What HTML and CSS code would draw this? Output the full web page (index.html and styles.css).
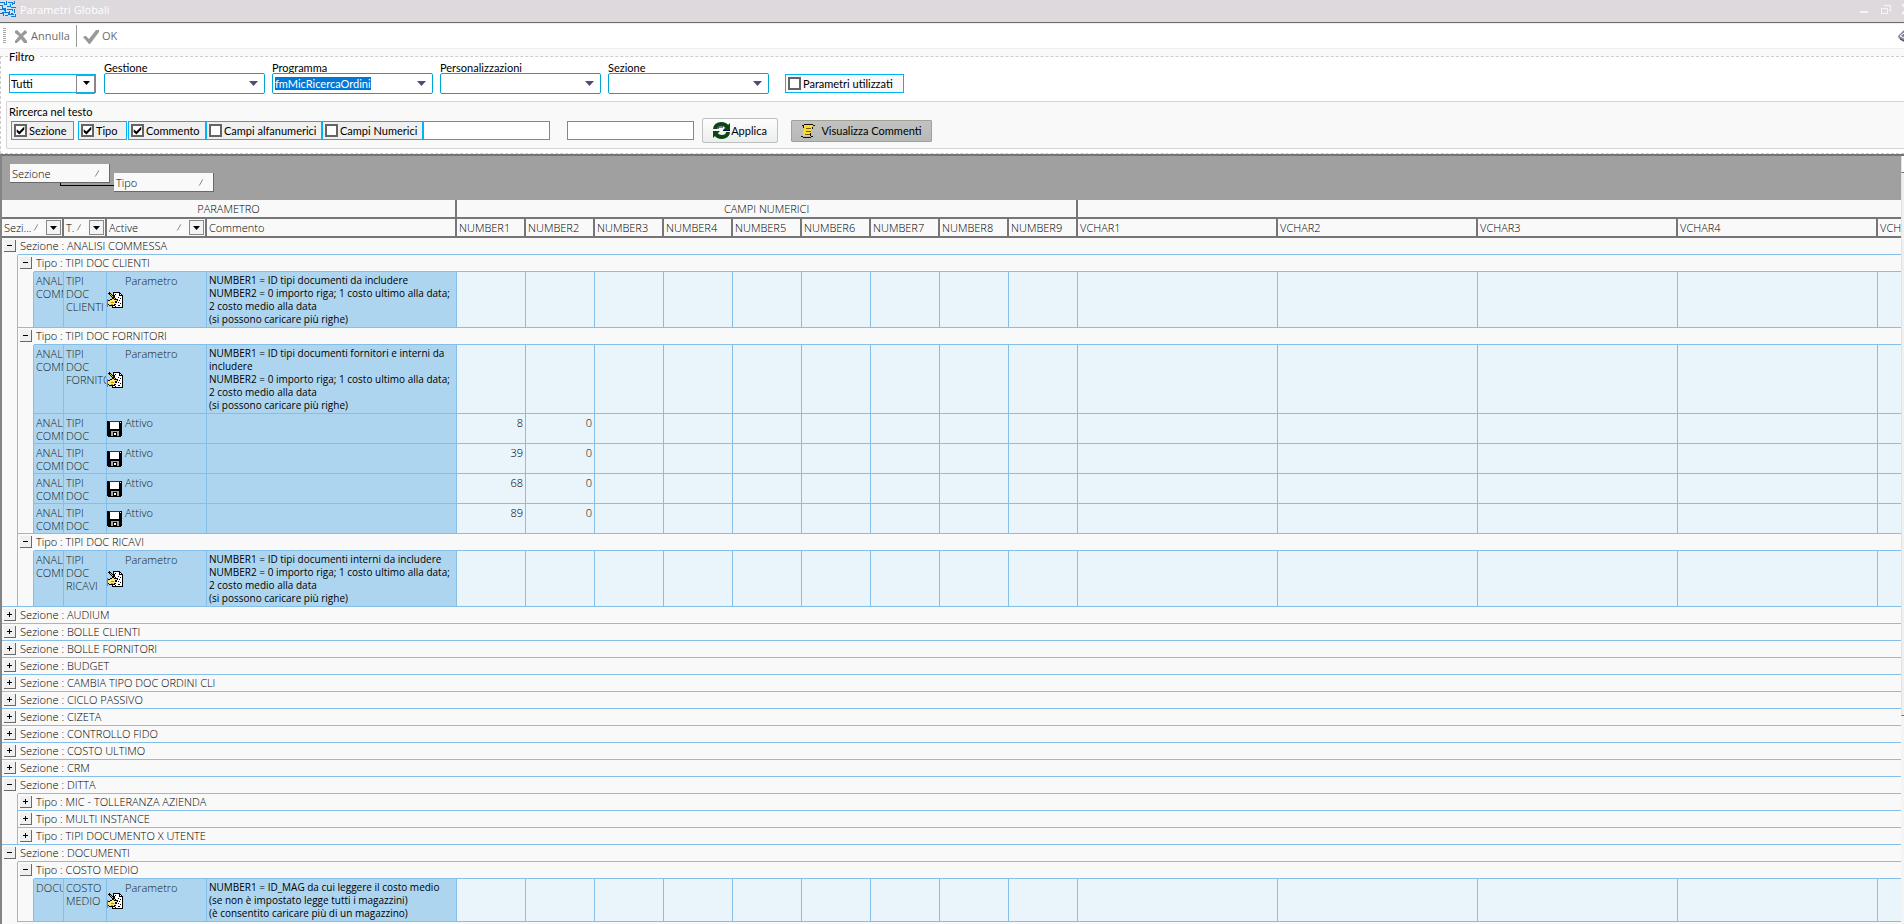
FILE: index.html
```html
<!DOCTYPE html>
<html lang="it">
<head>
<meta charset="utf-8">
<title>Parametri Globali</title>
<link rel="stylesheet" href="styles.css">
</head>
<body>
<svg class="defs" aria-hidden="true">
  <symbol id="sort" viewBox="0 0 10 9"><path d="M1 8L5 1" stroke="#8a8a8a" fill="none"/><path d="M5 1L9 8H1" stroke="#fff" fill="none"/></symbol>
  <symbol id="edit" viewBox="0 0 16 16" shape-rendering="crispEdges">
    <path d="M6 0h7v1h1v1h1v1h1v13H5V8h1z" fill="#000"/>
    <path d="M7 1h5v3h3v11H6V8h1z" fill="#fff"/>
    <path d="M13 2h1v1h-1z" fill="#fff"/>
    <path d="M11 5h1v1h-1zM13 6h1v1h-1zM12 8h1v1h-1zM11 10h1v1h-1zM13 11h1v1h-1zM11 13h2v1h-2zM8 14h1v1H8z" fill="#000"/>
    <path d="M0 7h1v8H0z" fill="#00a8e8"/>
    <path d="M1 8h2V7h2V6h4v1h2v2h-1v2H9v2H8v1H2v-1H1z" fill="#000"/>
    <path d="M1 9h2V8h2V7h3v1h2v1H8v2h1v1H7v1H2v-1H1z" fill="#ffe77a"/>
    <path d="M4 10h3v1H4zM4 12h2v1H4z" fill="#c89000"/>
    <path d="M2 1l7 7" stroke="#000" stroke-width="2"/><path d="M3 2l5 5" stroke="#f5c800"/>
    <path d="M9 2L5 7" stroke="#000"/>
  </symbol>
  <symbol id="disk" viewBox="0 0 16 16" shape-rendering="crispEdges">
    <path d="M0 0h15v15h-1v1H1v-1H0z" fill="#000"/>
    <rect x="3" y="1" width="9" height="7" fill="#fff"/><rect x="2" y="0" width="11" height="1" fill="#7a1a08"/>
    <rect x="4" y="10" width="8" height="5" fill="#a8a8a8"/><rect x="6" y="11" width="4" height="4" fill="#000"/><rect x="7" y="12" width="2" height="2" fill="#fff"/>
    <rect x="13" y="1" width="1" height="1" fill="#fff"/>
  </symbol>
</svg>
<header class="titlebar">
  <svg class="app-icon" viewBox="0 0 16 16" shape-rendering="crispEdges"><rect width="16" height="16" fill="#d3e1ee"/><path d="M0 1.500h4v3M6.500 0v4h-3M8 1.500h4v3M14.500 0v3h-2M0 4.500h2v3h4M7 5.500h3v-2M11 6.500h5M0 8.500h4v2M5.500 7v4M7 8.500h5v2M14.500 8v4M0 12.500h3v3M2 11.500h6v3M9.500 10v4h4M5 14.500h3M11 12.500h2M15.500 13v3h-5" fill="none" stroke="#0a7cdc"/></svg>
  <h1>Parametri Globali</h1>
  <svg class="win-buttons" viewBox="0 0 44 12" shape-rendering="crispEdges"><path d="M0 8h8" stroke="#f6f4f6" stroke-width="2"/><path d="M21.500 4.500h6v5h-6zM24 1.500h6.500v5h-2" fill="none" stroke="#f6f4f6"/><path d="M21 4h7M24 1h7" stroke="#f6f4f6"/><path d="M42 0l6 5l-6 5" fill="none" stroke="#f6f4f6" stroke-width="2"/></svg>
</header>
<nav class="toolbar">
  <span class="grip"></span>
  <button type="button" class="tool"><svg viewBox="0 0 14 15" width="14" height="15"><path d="M3 1l4 4l4-4l2 2v1L9 7l4 5v2h-3l-3-4l-4 4H1v-2l4-5L1 4V2z" fill="#999"/></svg>Annulla</button>
  <span class="separator"></span>
  <button type="button" class="tool"><svg viewBox="0 0 16 15" width="16" height="15"><path d="M0 8l2-1h1l3 3l7-9h3v2L7 15H6z" fill="#999"/></svg>OK</button>
  <svg class="cube" viewBox="0 0 6 12"><path d="M6 0L0 6l1 3l5 3z" fill="#888394"/><path d="M6 3L2 6l4 2M1 9l5 2" stroke="#fff" fill="none"/><path d="M2 9l4 2" stroke="#2d2755"/></svg>
</nav>
<main>
<fieldset class="filters">
  <legend>Filtro</legend>
  <div class="filter-row">
    <div class="classic-select"><select aria-label="Filtro"><option>Tutti</option></select></div>
    <div class="field"><label for="gestione">Gestione</label><div class="combo"><select id="gestione"><option></option></select></div></div>
    <div class="field"><label for="programma">Programma</label><div class="combo"><select id="programma" class="selected"><option>fmMicRicercaOrdini</option></select></div></div>
    <div class="field"><label for="personal">Personalizzazioni</label><div class="combo"><select id="personal"><option></option></select></div></div>
    <div class="field"><label for="sezione">Sezione</label><div class="combo"><select id="sezione"><option></option></select></div></div>
    <label class="check used"><input type="checkbox">Parametri utilizzati</label>
  </div>
  <section class="search">
    <h2>Rircerca nel testo</h2>
    <div class="search-row">
      <label class="check c1"><input type="checkbox" checked>Sezione</label>
      <label class="check c2"><input type="checkbox" checked>Tipo</label>
      <label class="check c3"><input type="checkbox" checked>Commento</label>
      <label class="check c4"><input type="checkbox">Campi alfanumerici</label>
      <label class="check c5"><input type="checkbox">Campi Numerici</label>
      <input type="text" class="text first" aria-label="Testo">
      <input type="text" class="text second" aria-label="Valore">
      <button type="button" class="apply"><svg viewBox="0 0 17 17" width="17" height="17"><path d="M2 7C2 4 5 2 8 2s5 1 6 3" fill="none" stroke="#0a4512" stroke-width="4"/><path d="M17 1v7h-7z" fill="#0a4512"/><path d="M15 10c0 3-3 5-6 5s-5-1-6-3" fill="none" stroke="#0a4512" stroke-width="4"/><path d="M0 16V9h7z" fill="#0a4512"/><path d="M10 8.500h7M5 7V5h5" stroke="#0a0a50" fill="none"/></svg>Applica</button>
      <button type="button" class="comments"><svg viewBox="0 0 14 14" width="14" height="14"><path d="M3 1h9l-3 11H2z" fill="#ffd92e"/><path d="M1 1.500h2M3 0.500h9M12 1.500h2M0 12.500h2M2 13.500h8M10 12.500h2M2.500 2v2M11.500 3v2M9.500 9v3" stroke="#111" fill="none"/><path d="M5 4.500h5M5 7.500h5M4 10.500h5" stroke="#6d5c10"/></svg>Visualizza Commenti</button>
    </div>
  </section>
</fieldset>
<section class="grid">
<div class="grid-body">
  <div class="group-panel">
    <div class="chip">Sezione<svg class="sort"><use href="#sort"/></svg></div>
    <span class="link"></span>
    <div class="chip lower">Tipo<svg class="sort"><use href="#sort"/></svg></div>
  </div>
  <table>
    <colgroup><col class="w-ind"><col class="w-ind"><col class="w-sez"><col class="w-tipo"><col class="w-act"><col class="w-com"><col span="9" class="w-num"><col span="4" class="w-char"><col></colgroup>
    <thead>
      <tr class="bands"><th colspan="6">PARAMETRO</th><th colspan="9">CAMPI NUMERICI</th><th colspan="5" class="last"></th></tr>
      <tr>
        <th colspan="3"><div class="head"><span>Sezi...</span><svg class="sort"><use href="#sort"/></svg><button type="button" class="drop" aria-label="Filtra Sezione"></button></div></th>
        <th><div class="head"><span>T.</span><svg class="sort"><use href="#sort"/></svg><button type="button" class="drop" aria-label="Filtra Tipo"></button></div></th>
        <th><div class="head"><span>Active</span><svg class="sort"><use href="#sort"/></svg><button type="button" class="drop" aria-label="Filtra Active"></button></div></th>
        <th>Commento</th><th>NUMBER1</th><th>NUMBER2</th><th>NUMBER3</th><th>NUMBER4</th><th>NUMBER5</th><th>NUMBER6</th><th>NUMBER7</th><th>NUMBER8</th><th>NUMBER9</th><th>VCHAR1</th><th>VCHAR2</th><th>VCHAR3</th><th>VCHAR4</th><th class="last">VCHAR5</th>
      </tr>
    </thead>
    <tbody>
      <tr class="group"><td class="tg"><button type="button" class="toggle" aria-label="Comprimi"></button></td><td colspan="19">Sezione : ANALISI COMMESSA</td></tr>
      <tr class="group"><td class="ind"></td><td class="tg"><button type="button" class="toggle" aria-label="Comprimi"></button></td><td colspan="18">Tipo : TIPI DOC CLIENTI</td></tr>
      <tr class="data"><td class="ind"></td><td class="ind end"></td><td><div class="cell l4">ANALISI COMMESSA</div></td><td><div class="cell l4">TIPI<br>DOC<br>CLIENTI</div></td><td><div class="state l4"><svg><use href="#edit"/></svg>Parametro</div></td><td class="note">NUMBER1 = ID tipi documenti da includere<br>NUMBER2 = 0 importo riga; 1 costo ultimo alla data;<br>2 costo medio alla data<br>(si possono caricare più righe)</td><td></td><td></td><td></td><td></td><td></td><td></td><td></td><td></td><td></td><td></td><td></td><td></td><td></td><td></td></tr>
      <tr class="group"><td class="ind"></td><td class="tg"><button type="button" class="toggle" aria-label="Comprimi"></button></td><td colspan="18">Tipo : TIPI DOC FORNITORI</td></tr>
      <tr class="data"><td class="ind"></td><td class="ind"></td><td><div class="cell l5">ANALISI COMMESSA</div></td><td><div class="cell l5">TIPI<br>DOC<br>FORNITORI</div></td><td><div class="state l5"><svg><use href="#edit"/></svg>Parametro</div></td><td class="note">NUMBER1 = ID tipi documenti fornitori e interni da<br>includere<br>NUMBER2 = 0 importo riga; 1 costo ultimo alla data;<br>2 costo medio alla data<br>(si possono caricare più righe)</td><td></td><td></td><td></td><td></td><td></td><td></td><td></td><td></td><td></td><td></td><td></td><td></td><td></td><td></td></tr>
      <tr class="data"><td class="ind"></td><td class="ind"></td><td><div class="cell l2">ANALISI COMMESSA</div></td><td><div class="cell l2">TIPI<br>DOC</div></td><td><div class="state l2"><svg><use href="#disk"/></svg>Attivo</div></td><td class="note"></td><td>8</td><td>0</td><td></td><td></td><td></td><td></td><td></td><td></td><td></td><td></td><td></td><td></td><td></td><td></td></tr>
      <tr class="data"><td class="ind"></td><td class="ind"></td><td><div class="cell l2">ANALISI COMMESSA</div></td><td><div class="cell l2">TIPI<br>DOC</div></td><td><div class="state l2"><svg><use href="#disk"/></svg>Attivo</div></td><td class="note"></td><td>39</td><td>0</td><td></td><td></td><td></td><td></td><td></td><td></td><td></td><td></td><td></td><td></td><td></td><td></td></tr>
      <tr class="data"><td class="ind"></td><td class="ind"></td><td><div class="cell l2">ANALISI COMMESSA</div></td><td><div class="cell l2">TIPI<br>DOC</div></td><td><div class="state l2"><svg><use href="#disk"/></svg>Attivo</div></td><td class="note"></td><td>68</td><td>0</td><td></td><td></td><td></td><td></td><td></td><td></td><td></td><td></td><td></td><td></td><td></td><td></td></tr>
      <tr class="data"><td class="ind"></td><td class="ind end"></td><td><div class="cell l2">ANALISI COMMESSA</div></td><td><div class="cell l2">TIPI<br>DOC</div></td><td><div class="state l2"><svg><use href="#disk"/></svg>Attivo</div></td><td class="note"></td><td>89</td><td>0</td><td></td><td></td><td></td><td></td><td></td><td></td><td></td><td></td><td></td><td></td><td></td><td></td></tr>
      <tr class="group"><td class="ind"></td><td class="tg"><button type="button" class="toggle" aria-label="Comprimi"></button></td><td colspan="18">Tipo : TIPI DOC RICAVI</td></tr>
      <tr class="data"><td class="ind end"></td><td class="ind end"></td><td><div class="cell l4">ANALISI COMMESSA</div></td><td><div class="cell l4">TIPI<br>DOC<br>RICAVI</div></td><td><div class="state l4"><svg><use href="#edit"/></svg>Parametro</div></td><td class="note">NUMBER1 = ID tipi documenti interni da includere<br>NUMBER2 = 0 importo riga; 1 costo ultimo alla data;<br>2 costo medio alla data<br>(si possono caricare più righe)</td><td></td><td></td><td></td><td></td><td></td><td></td><td></td><td></td><td></td><td></td><td></td><td></td><td></td><td></td></tr>
      <tr class="group"><td class="tg end"><button type="button" class="toggle plus" aria-label="Espandi"></button></td><td colspan="19">Sezione : AUDIUM</td></tr>
      <tr class="group"><td class="tg end"><button type="button" class="toggle plus" aria-label="Espandi"></button></td><td colspan="19">Sezione : BOLLE CLIENTI</td></tr>
      <tr class="group"><td class="tg end"><button type="button" class="toggle plus" aria-label="Espandi"></button></td><td colspan="19">Sezione : BOLLE FORNITORI</td></tr>
      <tr class="group"><td class="tg end"><button type="button" class="toggle plus" aria-label="Espandi"></button></td><td colspan="19">Sezione : BUDGET</td></tr>
      <tr class="group"><td class="tg end"><button type="button" class="toggle plus" aria-label="Espandi"></button></td><td colspan="19">Sezione : CAMBIA TIPO DOC ORDINI CLI</td></tr>
      <tr class="group"><td class="tg end"><button type="button" class="toggle plus" aria-label="Espandi"></button></td><td colspan="19">Sezione : CICLO PASSIVO</td></tr>
      <tr class="group"><td class="tg end"><button type="button" class="toggle plus" aria-label="Espandi"></button></td><td colspan="19">Sezione : CIZETA</td></tr>
      <tr class="group"><td class="tg end"><button type="button" class="toggle plus" aria-label="Espandi"></button></td><td colspan="19">Sezione : CONTROLLO FIDO</td></tr>
      <tr class="group"><td class="tg end"><button type="button" class="toggle plus" aria-label="Espandi"></button></td><td colspan="19">Sezione : COSTO ULTIMO</td></tr>
      <tr class="group"><td class="tg end"><button type="button" class="toggle plus" aria-label="Espandi"></button></td><td colspan="19">Sezione : CRM</td></tr>
      <tr class="group"><td class="tg"><button type="button" class="toggle" aria-label="Comprimi"></button></td><td colspan="19">Sezione : DITTA</td></tr>
      <tr class="group"><td class="ind"></td><td class="tg end"><button type="button" class="toggle plus" aria-label="Espandi"></button></td><td colspan="18">Tipo : MIC - TOLLERANZA AZIENDA</td></tr>
      <tr class="group"><td class="ind"></td><td class="tg end"><button type="button" class="toggle plus" aria-label="Espandi"></button></td><td colspan="18">Tipo : MULTI INSTANCE</td></tr>
      <tr class="group"><td class="ind end"></td><td class="tg end"><button type="button" class="toggle plus" aria-label="Espandi"></button></td><td colspan="18">Tipo : TIPI DOCUMENTO X UTENTE</td></tr>
      <tr class="group"><td class="tg"><button type="button" class="toggle" aria-label="Comprimi"></button></td><td colspan="19">Sezione : DOCUMENTI</td></tr>
      <tr class="group"><td class="ind"></td><td class="tg"><button type="button" class="toggle" aria-label="Comprimi"></button></td><td colspan="18">Tipo : COSTO MEDIO</td></tr>
      <tr class="data"><td class="ind"></td><td class="ind end"></td><td><div class="cell l3">DOCUMENTI</div></td><td><div class="cell l3">COSTO<br>MEDIO</div></td><td><div class="state l3"><svg><use href="#edit"/></svg>Parametro</div></td><td class="note">NUMBER1 = ID_MAG da cui leggere il costo medio<br>(se non è impostato legge tutti i magazzini)<br>(è consentito caricare più di un magazzino)</td><td></td><td></td><td></td><td></td><td></td><td></td><td></td><td></td><td></td><td></td><td></td><td></td><td></td><td></td></tr>
    </tbody>
  </table>
</div>
<div class="scrollbar"><span class="arrow-box"></span><span class="thumb"></span></div>
</section>
</main>
</body>
</html>
```

FILE: styles.css
```css
* { box-sizing: border-box; }
body {
  margin: 0;
  height: 100vh;
  display: flex;
  flex-direction: column;
  overflow: hidden;
  background: #f9f9f9;
  color: #000;
  font: 11px/13px Lato, "Open Sans", sans-serif;
}
button, input, select { font: inherit; color: inherit; margin: 0; padding: 0; border-radius: 0; }
h1, h2 { margin: 0; font-size: inherit; font-weight: 400; }
.defs { display: none; }

.titlebar {
  flex: none;
  display: flex;
  align-items: flex-start;
  height: 23px;
  background: #ddd9dd;
  border-bottom: 1px solid #6b6b6b;
}
.app-icon { width: 16px; height: 17px; margin-right: 4px; }
.titlebar h1 { color: #fff; font: 11px/19px "Open Sans", sans-serif; }
.win-buttons { width: 44px; height: 12px; margin: 4px 0 0 auto; }

.toolbar {
  flex: none;
  display: flex;
  align-items: center;
  height: 26px;
  padding-left: 3px;
  background: #fff;
  border-top: 1px solid #f0f0f0;
  border-bottom: 1px solid #efefef;
  font: 11px/16px "Open Sans", sans-serif;
}
.grip { width: 3px; height: 16px; margin-right: 8px; background: repeating-linear-gradient(#a8a8a8 0 1px, #fff 1px 2px); }
.tool { display: flex; align-items: center; gap: 3px; border: 0; background: none; color: #6b6b6b; }
.separator { width: 1px; height: 22px; margin: 0 6px; background: #999; }
.cube { width: 6px; height: 12px; margin-left: auto; }

main { flex: 1; min-height: 0; display: flex; flex-direction: column; }
.filters {
  flex: none;
  min-width: 0;
  margin: 1px 0 0;
  padding: 0 0 4px 8px;
  border: 1px dashed #ccc;
  border-right: 0;
  background: #fff;
}
.filters legend { padding: 0 4px 0 0; background: #f9f9f9; border-radius: 6px; }
.filter-row { display: flex; align-items: flex-end; height: 31px; }
.field { display: flex; flex-direction: column; margin-right: 7px; }
.field label { line-height: 10px; }
.combo {
  position: relative;
  display: flex;
  align-items: center;
  width: 161px;
  height: 21px;
  padding: 0 2px;
  border: 1px solid #00a6d6;
  border-radius: 2px;
  background: #fff;
}
.combo select { flex: 1; height: 13px; appearance: none; border: 0; background: none; outline: 0; }
.combo select.selected { flex: none; background: #0078d7; color: #fff; }
.combo::after {
  content: "";
  position: absolute;
  right: 6px;
  top: 7px;
  width: 9px;
  height: 5px;
  background: #514a78;
  clip-path: polygon(0 0, 100% 0, 50% 100%);
  pointer-events: none;
}
.classic-select {
  position: relative;
  width: 87px;
  height: 19px;
  margin: 0 8px 1px 0;
  border: 1px solid #00b4f0;
}
.classic-select select { width: 100%; height: 17px; padding-left: 1px; appearance: none; border: 0; background: #fff; }
.classic-select::after, .drop::after {
  content: "";
  position: absolute;
  width: 7px;
  height: 4px;
  background: #000;
  clip-path: polygon(0 0, 100% 0, 50% 100%);
  pointer-events: none;
}
.classic-select::after { right: 5px; top: 6px; }
.classic-select::before {
  content: "";
  position: absolute;
  right: 0;
  top: 0;
  width: 17px;
  height: 17px;
  border: 1px solid #888;
  pointer-events: none;
}
.check {
  display: flex;
  align-items: center;
  height: 19px;
  gap: 2px;
  padding-left: 2px;
  border: 1px solid #00b4f5;
  background: #f0f0f0;
  white-space: nowrap;
}
.check input { flex: none; position: relative; width: 13px; height: 13px; appearance: none; border: 2px solid #646464; background: #fff; }
.check input:checked::before {
  content: "";
  position: absolute;
  inset: 0;
  background: #000;
  clip-path: polygon(8% 35%, 38% 62%, 92% 5%, 92% 38%, 38% 95%, 8% 68%);
}
.used { width: 119px; margin: 0 0 1px 9px; background: #f9f9f9; }

.search {
  margin: 7px 0 0 -3px;
  padding: 3px 0 5px 2px;
  border: 1px solid #d6d6d6;
  border-right: 0;
  border-radius: 2px 0 0 2px;
  background: #f9f9f9;
}
.search h2 { line-height: 13px; }
.search-row { display: flex; align-items: center; height: 25px; padding-left: 2px; }
.c1 { width: 63px; margin-right: 4px; }
.c2 { width: 49px; margin-right: 1px; }
.c3 { width: 78px; }
.c4 { width: 116px; }
.c5 { width: 101px; }
.text { height: 19px; width: 127px; border: 1px solid #00b4f5; background: #fff; }
.text.second { margin: 0 8px 0 17px; }
.apply {
  display: flex;
  align-items: center;
  justify-content: center;
  gap: 1px;
  width: 76px;
  height: 25px;
  margin-right: 13px;
  border: 1px solid #bcc0c0;
  border-radius: 2px;
  background: linear-gradient(#fdfdfd, #eceeee);
}
.comments {
  display: flex;
  align-items: center;
  justify-content: center;
  gap: 6px;
  width: 141px;
  height: 22px;
  border: 1px solid #a0a394;
  border-radius: 1px;
  background: linear-gradient(#c2c2c2, #b7bab6);
}

.grid {
  flex: 1;
  min-height: 0;
  display: flex;
  border-left: 2px solid #838383;
  border-top: 2px solid #747474;
}
.grid-body { flex: 1; min-width: 0; overflow: hidden; font: 300 11px/13px "Open Sans", sans-serif; }
.group-panel { display: flex; align-items: flex-start; height: 44px; padding: 8px; background: #a0a0a0; }
.chip {
  display: flex;
  align-items: center;
  justify-content: space-between;
  width: 100px;
  height: 19px;
  padding: 0 5px 0 2px;
  border: solid #696969;
  border-width: 0 1px 1px 0;
  background: #f9f9f9;
}
.chip.lower { margin-top: 9px; }
.link { width: 54px; height: 3px; margin: 19px 0 0 -50px; border: solid #000; border-width: 0 0 1px 1px; }
.sort { flex: none; width: 10px; height: 9px; }

table { width: 100%; table-layout: fixed; border-collapse: separate; border-spacing: 0; }
.w-ind { width: 16px; }
.w-sez { width: 30px; }
.w-tipo { width: 43px; }
.w-act { width: 100px; }
.w-com { width: 250px; }
.w-num { width: 69px; }
.w-char { width: 200px; }
th {
  height: 19px;
  padding: 0 0 0 2px;
  border: solid #767676;
  border-width: 0 2px 2px 0;
  background: #f9f9f9;
  font-weight: 300;
  text-align: left;
  white-space: nowrap;
  overflow: hidden;
}
.bands th { padding: 0; text-align: center; }
th.last { border-right: 0; }
.head { display: flex; align-items: center; height: 17px; }
.head span { margin-right: auto; }
.drop {
  position: relative;
  flex: none;
  width: 15px;
  height: 15px;
  margin: 0 1px 0 3px;
  border: 1px solid #888;
  background: #f4f4f4;
}
.drop::after { left: 3px; top: 5px; }

td {
  padding: 2px 2px 1px;
  border: solid #85bfe8;
  border-width: 0 1px 1px 0;
  background: #e9f4fb;
  vertical-align: top;
  text-align: right;
  white-space: nowrap;
  overflow: hidden;
}
.group td { height: 17px; padding: 1px 2px 2px; border-right: 0; background: #f9f9f9; text-align: left; }
.group .tg { padding: 2px 0 0 2px; border: 0; line-height: 0; }
td.ind, .group td.ind { padding: 0; border-width: 0 1px 0 0; border-style: solid; border-color: #85bfe8; background: #f9f9f9; }
td.ind.end, .group td.ind.end { border-bottom-width: 1px; }
.group .tg.end { border-bottom: 1px solid #85bfe8; }
.data td:nth-child(n+3):nth-child(-n+6) { background: #aed5ef; text-align: left; color: #101a24; }
.data td:nth-child(3), .data td:nth-child(4) { padding-right: 0; }
.data td:nth-child(5) { padding-left: 0; }
.data td.note:nth-child(6) { color: #000; font-size: 10px; font-weight: 400; }
.data td:last-child { border-right: 0; }
.cell { overflow: hidden; white-space: normal; }
.state { display: flex; gap: 2px; }
.state svg { align-self: center; width: 16px; height: 16px; }
.l2 { height: 26px; }
.l3 { height: 39px; }
.l4 { height: 52px; }
.l5 { height: 65px; }
.toggle {
  position: relative;
  display: block;
  width: 12px;
  height: 12px;
  border: solid #696969;
  border-width: 0 1px 1px 0;
  background: #f0f0f0;
}
.toggle::before, .toggle.plus::after { content: ""; position: absolute; background: #000; }
.toggle::before { left: 3px; top: 5px; width: 5px; height: 1px; }
.toggle.plus::after { left: 5px; top: 3px; width: 1px; height: 5px; }

.scrollbar { flex: none; display: flex; flex-direction: column; width: 3px; background: #f4f4f4; }
.arrow-box { height: 17px; border-bottom: 1px solid #696969; border-left: 1px solid #e3e3e3; background: #fff; }
.thumb { height: 543px; border-bottom: 1px solid #696969; border-left: 1px solid #e3e3e3; background: #f0f0f0; }
```
